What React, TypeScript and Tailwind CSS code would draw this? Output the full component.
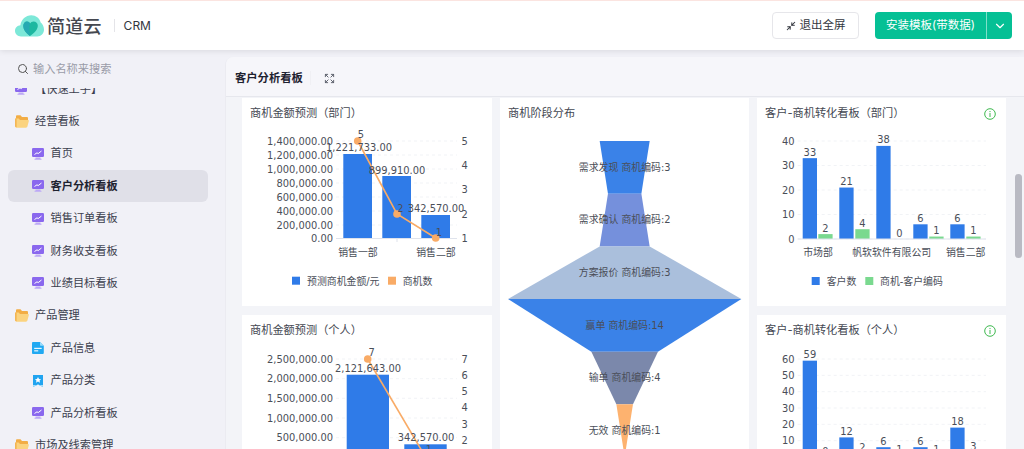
import React from "react";
import { ChevronDown, Expand, Minimize2, Search } from "lucide-react";

const Logo = () => (
  <svg width="29" height="22" viewBox="0 0 29 22" className="shrink-0">
    <path
      d="M6 21.500C2.700 21.500 0 19 0 15.800 0 12.800 2.400 10.400 5.400 10.200 6.300 4.500 10.700 0.300 16.300 0.300c4.600 0 8.300 3 9.400 7.300C27.600 9 29 11.800 29 14.800c0 3.700-3 6.700-6.700 6.700z"
      fill="#7de8d8"
    />
    <path
      d="M15 21C10.500 17.800 8.300 14.500 8.300 11c0-2.600 1.700-4.500 3.700-4.500 1.500 0 2.500 0.800 3 2 0.800-1.200 2-2 3.500-2 2.500 0 4.300 1.800 4.300 4.300C22.800 14.300 19.800 17.800 15 21z"
      fill="#1cb8a0"
    />
    <path d="M15 8.500c-1 3-0.800 7.500 0 12.500-4.500-3.200-6.700-6.500-6.700-10 0-2.600 1.700-4.500 3.700-4.500 1.500 0 2.500 0.800 3 2z" fill="#25a9b2" />
  </svg>
);

const FolderIcon = () => (
  <svg width="14" height="13" viewBox="0 0 14 13" className="shrink-0">
    <path d="M1 1.500C1 .8 1.500.3 2.200.3h3.300l1.500 1.700h4.800c.7 0 1.200.5 1.200 1.200v2H1z" fill="#f2ad45" />
    <path d="M.2 11V3.500h3.500L5 5h7.800c.8 0 1.200.5 1 1.200l-1.400 5.300c-.2.700-.7 1.200-1.400 1.200H2C1 12.700.2 12 .2 11z" fill="#fbd37f" />
    <path d="M.2 3.500h1.300v9C.7 12.300.2 11.700.2 11z" fill="#f2ad45" />
  </svg>
);

const BoardIcon = () => (
  <svg width="12" height="12" viewBox="0 0 12 12" className="shrink-0">
    <rect x="0" y="0" width="12" height="9" rx="1.200" fill="#8a68ee" />
    <path d="M3.500 9.500h5v1.300h1v1H2.500v-1h1z" fill="#bca8f6" />
    <path d="M2.500 6.500 5 4.800l1.200.8L9.500 3" stroke="#ffffff" strokeWidth="1" fill="none" />
  </svg>
);

const DocIcon = () => (
  <svg width="12" height="12" viewBox="0 0 12 12" className="shrink-0">
    <path d="M1.200 0H8l3.800 3.800v6.900c0 .7-.5 1.300-1.200 1.300H1.200C.5 12 0 11.400 0 10.700V1.200C0 .5.500 0 1.200 0z" fill="#21a9f2" />
    <path d="M8 0l3.800 3.800H9c-.6 0-1-.4-1-1z" fill="#9bdcfb" />
    <rect x="2.200" y="5.800" width="7.500" height="1.100" fill="#ffffff" />
    <rect x="2.200" y="8.300" width="4" height="1.100" fill="#ffffff" />
  </svg>
);

const TagIcon = () => (
  <svg width="12" height="12" viewBox="0 0 12 12" className="shrink-0">
    <path d="M1 0h10v12L6 9.500 1 12z" fill="#21a4f0" />
    <path d="M6 2l1 2 2.100.2-1.600 1.400.5 2.100L6 6.600 4 7.700l.5-2.100L2.900 4.200 5 4z" fill="#ffffff" />
    <path d="M1 10h10v2L6 9.500 1 12z" fill="#a6defa" />
  </svg>
);

const menu = [
  { label: "【快速上手】", icon: <BoardIcon />, child: false },
  { label: "经营看板", icon: <FolderIcon />, child: false, folder: true },
  { label: "首页", icon: <BoardIcon />, child: true },
  { label: "客户分析看板", icon: <BoardIcon />, child: true, active: true },
  { label: "销售订单看板", icon: <BoardIcon />, child: true },
  { label: "财务收支看板", icon: <BoardIcon />, child: true },
  { label: "业绩目标看板", icon: <BoardIcon />, child: true },
  { label: "产品管理", icon: <FolderIcon />, child: false, folder: true },
  { label: "产品信息", icon: <DocIcon />, child: true },
  { label: "产品分类", icon: <TagIcon />, child: true },
  { label: "产品分析看板", icon: <BoardIcon />, child: true },
  { label: "市场及线索管理", icon: <FolderIcon />, child: false, folder: true },
];

const Sidebar = () => (
  <aside className="w-[225px] shrink-0 flex flex-col bg-[#f1f1f7]">
    <div className="h-[38px] shrink-0 flex items-center pl-[17px] gap-[4px] z-10 bg-[#f1f1f7]">
      <Search size={12} color="#555" />
      <span className="text-[11.200px] text-[#9a9ca8]">输入名称来搜索</span>
    </div>
    <div className="mt-[-15.100px] flex flex-col">
      {menu.map((item) => (
        <div
          key={item.label}
          className={
            item.active
              ? "h-[32.400px] ml-[8px] mr-[17px] rounded-md bg-[#e0e0e8] flex items-center pl-[23.500px] gap-[7px]"
              : item.child
              ? "h-[32.400px] ml-[8px] mr-[17px] flex items-center pl-[23.500px] gap-[7px]"
              : item.folder
              ? "h-[32.400px] ml-[8px] mr-[17px] flex items-center pl-[7px] gap-[6px]"
              : "h-[32.400px] ml-[8px] mr-[17px] flex items-center pl-[7px] gap-[8px]"
          }
        >
          {item.icon}
          <span
            className={
              item.active
                ? "text-[11.200px] font-bold text-[#1e2230]"
                : "text-[11.200px] text-[#3c404e]"
            }
          >
            {item.label}
          </span>
        </div>
      ))}
    </div>
  </aside>
);

// chart text, anchored on its middle line
const T = ({
  x,
  y,
  children,
  a = "middle",
}: {
  x: number;
  y: number;
  children: React.ReactNode;
  a?: "start" | "middle" | "end";
}) => (
  <text x={x} y={y} textAnchor={a} dominantBaseline="central" fontSize="9.900" fill="#4a4e58">
    {children}
  </text>
);

const Grid = ({ ys, x1, x2 }: { ys: number[]; x1: number; x2: number }) => (
  <>
    {ys.map((y) => (
      <line key={y} x1={x1} x2={x2} y1={y} y2={y} stroke="#eef0f4" strokeWidth="0.800" strokeDasharray="3 3" />
    ))}
  </>
);

const Dot = ({ x, y }: { x: number; y: number }) => <circle cx={x} cy={y} r="3.800" fill="#f9ab66" />;

const Card = ({
  title,
  info,
  children,
  className,
}: {
  title: string;
  info?: boolean;
  children: React.ReactNode;
  className?: string;
}) => (
  <section className={"bg-white overflow-hidden flex flex-col " + (className ?? "")}>
    <div className="h-[30px] shrink-0 flex items-center justify-between pt-[1px] pl-[8px] pr-[10px]">
      <span className="text-[11.200px] text-[#444852]">{title}</span>
      {info && (
        <svg width="12" height="12" viewBox="0 0 12 12">
          <circle cx="6" cy="6" r="5.300" fill="none" stroke="#3fb950" strokeWidth="1" />
          <rect x="5.500" y="5" width="1" height="4" fill="#3fb950" />
          <rect x="5.500" y="3" width="1" height="1.100" fill="#3fb950" />
        </svg>
      )}
    </div>
    {children}
  </section>
);

const chartFont = "block [font-family:'DejaVu_Sans','Noto_Sans_CJK_SC',sans-serif]";

const ForecastDept = () => {
  const ys = [141, 155, 169, 183, 197, 211, 225, 238.500];
  const left = ["1,400,000.00", "1,200,000.00", "1,000,000.00", "800,000.00", "600,000.00", "400,000.00", "200,000.00", "0.00"];
  return (
    <svg width="250" height="178" viewBox="242 128 250 178" className={chartFont}>
      <Grid ys={ys.slice(0, 7)} x1={336} x2={457} />
      {left.map((v, i) => (
        <T key={v} x={333} y={ys[i]} a="end">
          {v}
        </T>
      ))}
      {[5, 4, 3, 2, 1].map((v, i) => (
        <T key={v} x={461.500} y={141 + i * 24.400} a="start">
          {v}
        </T>
      ))}
      <rect x="343.300" y="154" width="28.700" height="84.500" fill="#2f7be8" />
      <rect x="382.300" y="176" width="28.700" height="62.500" fill="#2f7be8" />
      <rect x="421.300" y="215" width="28.700" height="23.500" fill="#2f7be8" />
      <line x1="336" x2="457" y1="238.500" y2="238.500" stroke="#dfe3ec" />
      <line x1="397" x2="397" y1="238.500" y2="242" stroke="#dfe3ec" />
      <polyline points="357.700,141 397,214 435.700,238" fill="none" stroke="#f9ab66" strokeWidth="1.600" />
      <Dot x={357.700} y={141} />
      <Dot x={397} y={214} />
      <Dot x={435.700} y={238} />
      <T x={361} y={134}>5</T>
      <T x={359} y={147.500}>1,221,733.00</T>
      <T x={397} y={170}>899,910.00</T>
      <T x={400.500} y={208}>2</T>
      <T x={436} y={208.500}>342,570.00</T>
      <T x={439} y={232}>1</T>
      <T x={358} y={252}>销售一部</T>
      <T x={436} y={252}>销售二部</T>
      <rect x="292" y="276.700" width="8" height="8" fill="#2f7be8" />
      <T x={307} y={281} a="start">预测商机金额/元</T>
      <rect x="388" y="276.700" width="8" height="8" fill="#f9ab66" />
      <T x={402.700} y={281} a="start">商机数</T>
    </svg>
  );
};

const ForecastPerson = () => {
  const ys = [359, 378.700, 398.300, 418, 437.700];
  const left = ["2,500,000.00", "2,000,000.00", "1,500,000.00", "1,000,000.00", "500,000.00"];
  return (
    <svg width="250" height="120" viewBox="242 345 250 120" className={chartFont}>
      <Grid ys={ys} x1={336} x2={457} />
      {left.map((v, i) => (
        <T key={v} x={333} y={ys[i]} a="end">
          {v}
        </T>
      ))}
      {[7, 6, 5, 4, 3, 2, 1].map((v, i) => (
        <T key={v} x={461.500} y={359 + i * 16.300} a="start">
          {v}
        </T>
      ))}
      <rect x="346.700" y="374.700" width="42.300" height="90" fill="#2f7be8" />
      <rect x="404.300" y="444.300" width="42.400" height="20" fill="#2f7be8" />
      <polyline points="367.700,359 425.500,457" fill="none" stroke="#f9ab66" strokeWidth="1.600" />
      <Dot x={367.700} y={359} />
      <T x={371.700} y={352.700}>7</T>
      <T x={368} y={368}>2,121,643.00</T>
      <T x={426} y={437}>342,570.00</T>
      <T x={429} y={449}>1</T>
    </svg>
  );
};

const funnel = [
  { y1: 141, y2: 193.700, w1: 25, w2: 16.700, color: "#3a82e8", label: "需求发现 商机编码:3" },
  { y1: 193.700, y2: 246.400, w1: 16.700, w2: 25, color: "#7590dc", label: "需求确认 商机编码:2" },
  { y1: 246.400, y2: 299, w1: 25, w2: 116.700, color: "#aabfdc", label: "方案报价 商机编码:3" },
  { y1: 299, y2: 351.700, w1: 116.700, w2: 33.300, color: "#3a82e8", label: "赢单 商机编码:14" },
  { y1: 351.700, y2: 404.300, w1: 33.300, w2: 8.300, color: "#7b88ab", label: "输单 商机编码:4" },
  { y1: 404.300, y2: 457, w1: 8.300, w2: 0, color: "#fdb26f", label: "无效 商机编码:1" },
];

const Funnel = () => (
  <svg width="249" height="332" viewBox="500 128 249 332" className={chartFont}>
    {funnel.map((f) => (
      <polygon
        key={f.label}
        points={`${624.670 - f.w1},${f.y1} ${624.670 + f.w1},${f.y1} ${624.670 + f.w2},${f.y2} ${624.670 - f.w2},${f.y2}`}
        fill={f.color}
      />
    ))}
    {funnel.map((f) => (
      <T key={f.label} x={624.670} y={(f.y1 + f.y2) / 2 - 0.300}>
        {f.label}
      </T>
    ))}
  </svg>
);

const blueX = [802.700, 839.300, 876.300, 913.300, 950.300];
const greenX = [818.300, 855.300, 892.300, 929.300, 966.300];

const Convert = ({
  top,
  base,
  unit,
  ticks,
  step,
  blue,
  green,
  height,
  children,
}: {
  top: number;
  base: number;
  unit: number;
  ticks: number[];
  step: number;
  blue: number[];
  green: number[];
  height: number;
  children?: React.ReactNode;
}) => (
  <svg width="249" height={height} viewBox={`757 ${top} 249 ${height}`} className={chartFont}>
    <Grid ys={ticks.map((v) => base - v * step)} x1={797.700} x2={986} />
    {ticks.map((v) => (
      <T key={v} x={794.500} y={base - v * step} a="end">
        {v}
      </T>
    ))}
    {blue.map((v, i) => (
      <g key={i}>
        <rect x={blueX[i]} y={base - v * unit} width="14.300" height={v * unit} fill="#2f7be8" />
        <T x={blueX[i] + 7.200} y={base - v * unit - 6}>{v}</T>
      </g>
    ))}
    {green.map((v, i) => (
      <g key={i}>
        <rect x={greenX[i]} y={base - v * unit} width="14.300" height={v * unit} fill="#7ad98f" />
        <T x={greenX[i] + 7.200} y={base - v * unit - 6}>{v}</T>
      </g>
    ))}
    {children}
  </svg>
);

export default function App() {
  return (
    <div className="w-[1024px] h-[449px] overflow-hidden flex flex-col bg-[#f1f1f7] [font-family:Inter,'Noto_Sans_CJK_SC',sans-serif]">
      <header className="h-[50px] shrink-0 bg-white border-t border-[#fbe4e0] shadow-[0_1px_6px_rgba(0,0,0,0.10)] z-20 flex items-center pl-[15px] pr-[12px]">
        <Logo />
        <span className="ml-[3px] pt-[2px] text-[18px] font-medium text-[#454850] tracking-[0.200px]">简道云</span>
        <div className="ml-[12px] w-px h-[13px] bg-[#e4e4e8]" />
        <span className="ml-[9px] text-[12px] text-[#33363e]">CRM</span>
        <button className="ml-auto h-[27px] w-[87px] flex items-center justify-center gap-[4px] pt-px rounded border border-[#e6e6ea] bg-white text-[11.500px] text-[#33363e]">
          <Minimize2 size={10} strokeWidth={2.500} />
          退出全屏
        </button>
        <div className="ml-[16px] h-[27px] w-[137px] flex rounded bg-[#05c095] text-white text-[11.500px]">
          <span className="w-[111px] pt-px flex items-center justify-center">安装模板(带数据)</span>
          <span className="flex-1 border-l border-[#7fe0ca] flex items-center justify-center">
            <ChevronDown size={14} />
          </span>
        </div>
      </header>
      <div className="flex-1 min-h-0 flex">
        <Sidebar />
        <main className="flex-1 min-w-0 pt-[7px] relative">
          <div className="h-full rounded-tl-lg bg-[#f3f4f8] flex flex-col overflow-hidden border-l border-[#ebebf1]">
            <div className="h-[40px] shrink-0 bg-[#f6f6fa] border-b border-[#e6e7ed] flex items-center pt-[3px] pl-[9px]">
              <span className="text-[11.300px] font-bold text-[#1e2230]">客户分析看板</span>
              <div className="ml-[7px] w-px h-[14px] bg-[#f0f0f4]" />
              <Expand size={11} color="#555a66" className="ml-[13px]" />
            </div>
            <div className="flex-1 min-h-0 overflow-hidden pl-[16px] pr-[17px] pt-px">
              <div className="grid grid-cols-[250px_249px_249px] grid-rows-[208px_160px] gap-x-[8px] gap-y-[9px]">
                <Card title="商机金额预测（部门）">
                  <ForecastDept />
                </Card>
                <Card title="商机阶段分布" className="row-span-2">
                  <Funnel />
                </Card>
                <Card title="客户-商机转化看板（部门）" info>
                  <Convert
                    top={128}
                    base={239}
                    unit={2.450}
                    step={2.450}
                    ticks={[0, 10, 20, 30, 40]}
                    blue={[33, 21, 38, 6, 6]}
                    green={[2, 4, 0, 1, 1]}
                    height={178}
                  >
                    <line x1="797.700" x2="986" y1="239" y2="239" stroke="#dfe3ec" />
                    <T x={818} y={252}>市场部</T>
                    <T x={891.700} y={252}>帆软软件有限公司</T>
                    <T x={965.700} y={252}>销售二部</T>
                    <rect x="811.700" y="277" width="8" height="8" fill="#2f7be8" />
                    <T x={826.700} y={281} a="start">客户数</T>
                    <rect x="865.300" y="277" width="8" height="8" fill="#7ad98f" />
                    <T x={880} y={281} a="start">商机-客户编码</T>
                  </Convert>
                </Card>
                <Card title="商机金额预测（个人）">
                  <ForecastPerson />
                </Card>
                <Card title="客户-商机转化看板（个人）" info>
                  <Convert
                    top={345}
                    base={457}
                    unit={1.633}
                    step={1.633}
                    ticks={[10, 20, 30, 40, 50, 60]}
                    blue={[59, 12, 6, 6, 18]}
                    green={[0, 2, 1, 1, 3]}
                    height={120}
                  />
                </Card>
              </div>
            </div>
          </div>
          <div className="absolute left-[789.500px] top-[124px] w-[7px] h-[84px] rounded-full bg-[#b9bac3]" />
        </main>
      </div>
    </div>
  );
}
